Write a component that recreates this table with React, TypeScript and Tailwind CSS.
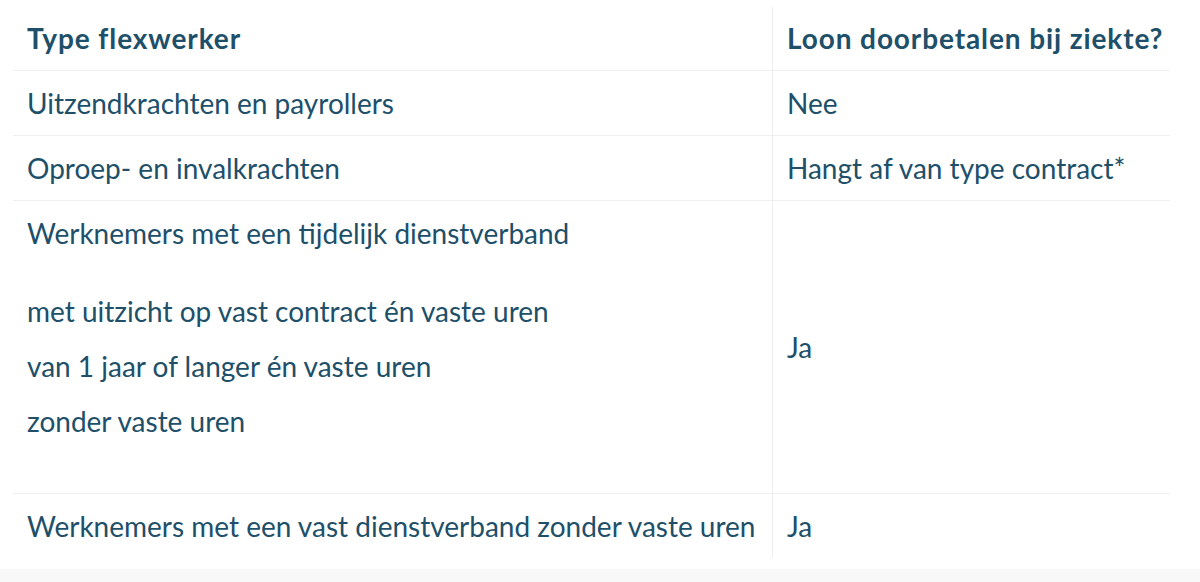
import React from "react";

const font = { fontFamily: "Lato, 'Noto Sans', sans-serif" };

export default function App() {
  return (
    <div className="w-[1200px] h-[582px] bg-white overflow-hidden text-[#204f69]" style={font}>
      <div className="pt-[7px] pl-[13px]">
        <div className="w-[1157px] flex flex-col">
          <div className="flex border-b border-[#efefef]">
            <div className="w-[759px] pl-[14px] py-[16px] leading-[31px] text-[28px] font-bold tracking-[0.9px]">Type flexwerker</div>
            <div className="flex-1 border-l border-[#efefef] pl-[14px] py-[16px] leading-[31px] text-[28px] font-bold tracking-[0.9px]">Loon doorbetalen bij ziekte?</div>
          </div>
          <div className="flex border-b border-[#efefef]">
            <div className="w-[759px] pl-[14px] py-[16px] leading-[32px] text-[28px]">Uitzendkrachten en payrollers</div>
            <div className="flex-1 border-l border-[#efefef] pl-[14px] py-[16px] leading-[32px] text-[28px]">Nee</div>
          </div>
          <div className="flex border-b border-[#efefef]">
            <div className="w-[759px] pl-[14px] py-[16px] leading-[32px] text-[28px]">Oproep- en invalkrachten</div>
            <div className="flex-1 border-l border-[#efefef] pl-[14px] py-[16px] leading-[32px] text-[28px]">Hangt af van type contract*</div>
          </div>
          <div className="flex border-b border-[#efefef]">
            <div className="w-[759px] pl-[14px] py-[16px] text-[28px]">
              <p className="leading-[33px]">Werknemers met een tijdelijk dienstverband</p>
              <div className="mt-[34px] mb-[28px] leading-[55px]">
                <p>met uitzicht op vast contract én vaste uren</p>
                <p>van 1 jaar of langer én vaste uren</p>
                <p>zonder vaste uren</p>
              </div>
            </div>
            <div className="flex-1 border-l border-[#efefef] pl-[14px] flex items-center text-[28px] leading-[32px]">Ja</div>
          </div>
          <div className="flex">
            <div className="w-[759px] pl-[14px] py-[16px] leading-[32px] text-[28px]">Werknemers met een vast dienstverband zonder vaste uren</div>
            <div className="flex-1 border-l border-[#efefef] pl-[14px] py-[16px] leading-[32px] text-[28px]">Ja</div>
          </div>
        </div>
      </div>
      <div className="mt-[11px] h-[20px] bg-[#f8f8f8]" />
    </div>
  );
}
